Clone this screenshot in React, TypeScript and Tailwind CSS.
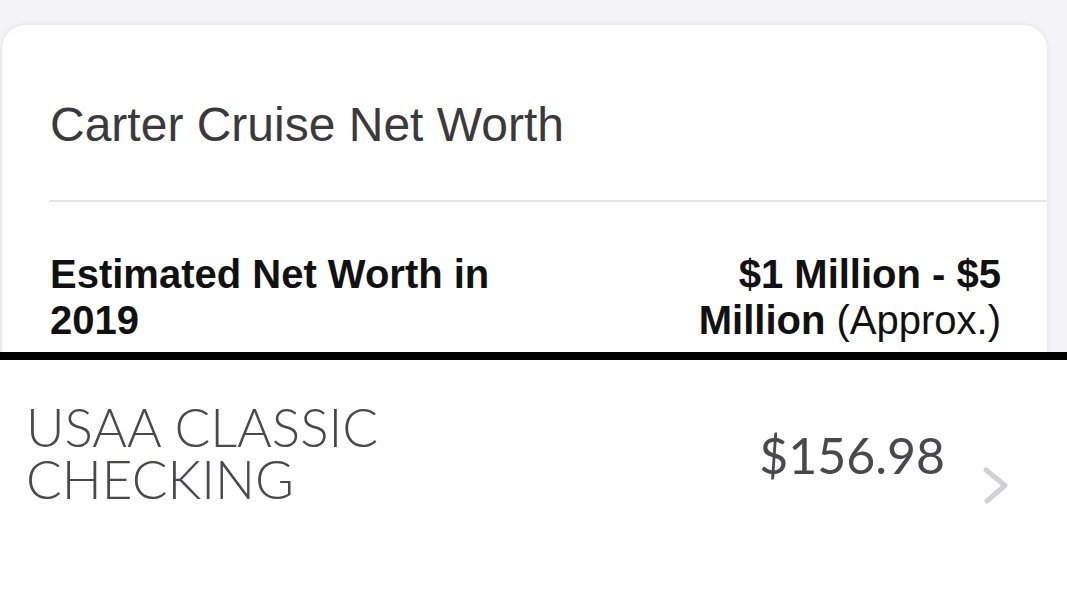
import React from "react";

const Chevron: React.FC = () => (
  <svg width="30" height="44" viewBox="0 0 30 44" fill="none">
    <path
      d="M7 6 L26 21.5 L8 37"
      stroke="#d0d0d5"
      strokeWidth="5"
      strokeLinecap="round"
      strokeLinejoin="round"
    />
  </svg>
);

export default function App() {
  return (
    <div className="w-[1067px] h-[601px] bg-white overflow-hidden">
      {/* net worth card */}
      <div className="h-[352px] bg-[#f4f4f8] pt-[25px] pl-[2px] pr-[20px] overflow-hidden">
        <div className="h-[360px] bg-white rounded-t-[24px] shadow-[0_0_6px_rgba(0,0,0,0.08)] font-['Liberation_Sans',Arial,sans-serif]">
          <div className="pl-[48px] pt-[72px] pb-[47px]">
            <h2 className="text-[48px] leading-[56px] text-[#3a3a3d]">
              Carter Cruise Net Worth
            </h2>
          </div>
          <div className="ml-[47px] border-t-2 border-[#e6e6ea]" />
          <div className="flex justify-between pl-[48px] pr-[46px] pt-[49px] text-[40px] leading-[46px] text-[#111]">
            <div className="font-semibold w-[470px]">
              Estimated Net Worth in 2019
            </div>
            <div className="text-right w-[345px]">
              <span className="font-semibold">$1 Million - $5 Million</span>{" "}
              (Approx.)
            </div>
          </div>
        </div>
      </div>
      <div className="h-[8px] bg-black" />
      {/* account row */}
      <div className="flex items-start pl-[26px] pr-[58px] pt-[41px] font-['Lato',sans-serif] font-light text-[#48484d]">
        <div className="text-[53px] leading-[52px] w-[420px]">
          USAA CLASSIC
          <br />
          CHECKING
        </div>
        <div className="flex-1 flex justify-end pt-[29px] text-[50px] leading-[50px] font-normal">
          $156.98
        </div>
        <div className="pt-[63px] pl-[34px]">
          <Chevron />
        </div>
      </div>
    </div>
  );
}
